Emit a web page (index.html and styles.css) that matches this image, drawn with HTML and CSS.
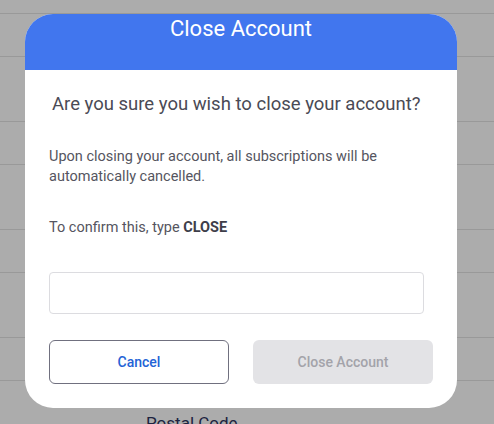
FILE: index.html
```html
<!DOCTYPE html>
<html lang="en">
<head>
    <meta charset="UTF-8">
    <meta name="viewport" content="width=device-width, initial-scale=1.0">
    <title>Close Account</title>
    <link rel="stylesheet" href="styles.css">
</head>
<body>
    <div class="page">
        <div class="field-box"></div>
        <div class="field-label"></div>
        <div class="field-box"></div>
        <div class="field-label"></div>
        <div class="field-box"></div>
        <div class="field-label"></div>
        <div class="field-box"></div>
        <div class="field-label">Postal Code</div>
    </div>

    <div class="modal">
        <div class="modal-header">
            <h1>Close Account</h1>
        </div>
        <div class="modal-body">
            <h2>Are you sure you wish to close your account?</h2>
            <p class="info">Upon closing your account, all subscriptions will be automatically cancelled.</p>
            <p class="confirm">To confirm this, type <b>CLOSE</b></p>
            <input type="text" class="confirm-input">
            <div class="actions">
                <button class="btn btn-cancel">Cancel</button>
                <button class="btn btn-close" disabled>Close Account</button>
            </div>
        </div>
    </div>
</body>
</html>
```

FILE: styles.css
```css
body {
    margin: 0;
    font-family: Roboto, 'Liberation Sans', sans-serif;
    background: #acacac;
    overflow: hidden;
}
.page {
    height: 424px;
    padding-top: 13px;
    box-sizing: border-box;
    overflow: hidden;
}
.field-box {
    height: 42px;
    border-top: 1px solid #999;
    border-bottom: 1px solid #999;
}
.field-label {
    height: 32px;
    padding-top: 32px;
    padding-left: 146px;
    font-size: 17px;
    line-height: 20px;
    color: #1c2340;
}
.modal {
    position: absolute;
    left: 25px;
    top: 14px;
    width: 432px;
    background: white;
    border-radius: 28px;
    overflow: hidden;
}
.modal-header {
    height: 56px;
    background: #4176ee;
    text-align: center;
}
.modal-header h1 {
    margin: 0;
    padding-top: 2px;
    font-size: 22px;
    font-weight: 400;
    color: white;
}
.modal-body {
    padding: 22px 24px 24px;
}
.modal-body h2 {
    margin: 0 0 31px;
    padding-left: 3px;
    font-size: 18.5px;
    line-height: 24px;
    font-weight: 400;
    color: #4a4a55;
}
.info, .confirm {
    margin: 0;
    font-size: 14.5px;
    line-height: 20px;
    color: #555560;
}
.info {
    margin-bottom: 31px;
}
.confirm b {
    color: #3e3e4a;
}
.confirm-input {
    display: block;
    box-sizing: border-box;
    width: 375px;
    height: 42px;
    margin-top: 34px;
    border: 1px solid #dcdce0;
    border-radius: 4px;
}
.actions {
    display: flex;
    gap: 24px;
    margin-top: 26px;
}
.btn {
    width: 180px;
    height: 44px;
    border-radius: 6px;
    font-family: inherit;
    font-size: 14px;
    font-weight: 500;
}
.btn-cancel {
    background: white;
    border: 1px solid #70707f;
    color: #2463d6;
}
.btn-close {
    background: #e3e3e6;
    border: none;
    color: #a3a3aa;
}
```
